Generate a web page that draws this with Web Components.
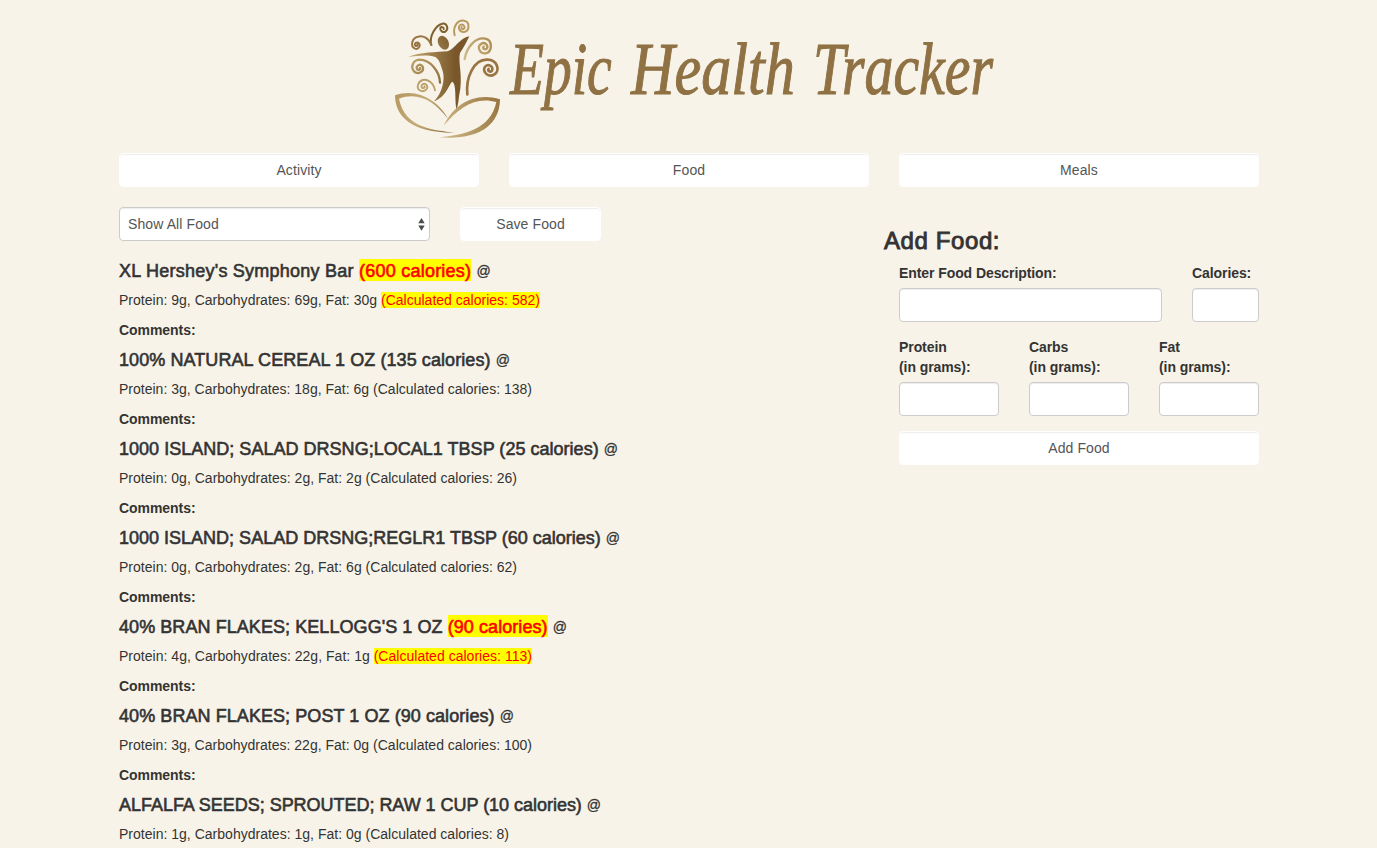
<!DOCTYPE html>
<html lang="en">
<head>
<meta charset="utf-8">
<title>Epic Health Tracker</title>
<style>
html,body{margin:0;height:848px;overflow:hidden;background:#f8f3e8}
body{font:14px/20px "Liberation Sans",Arial,sans-serif;color:#333}
</style>
</head>
<body>
<health-app></health-app>
<script>
const define = (name, html, setup) => {
  const t = document.createElement('template');
  t.innerHTML = html;
  customElements.define(name, class extends HTMLElement {
    constructor() {
      super();
      this.attachShadow({mode: 'open'}).append(t.content.cloneNode(true));
    }
    connectedCallback() { if (setup) setup(this, this.shadowRoot); }
  });
};

define('brand-logo', `
<style>:host{display:block;height:153px;box-sizing:border-box;padding:10px 0 0 385px}svg{display:block;overflow:visible}
text{font-family:"Liberation Serif",serif;font-style:italic;font-size:74px;fill:#8f7143;stroke:#8f7143;stroke-width:1.1}</style>
<svg width="625" height="135" viewBox="0 0 625 135">
<defs>
<linearGradient id="b" gradientUnits="userSpaceOnUse" x1="70" y1="130" x2="245" y2="130"><stop offset="0" stop-color="#c9b27c"/><stop offset=".35" stop-color="#a28450"/><stop offset=".8" stop-color="#79572a"/><stop offset="1" stop-color="#79572a"/></linearGradient>
<linearGradient id="l" gradientUnits="userSpaceOnUse" x1="30" y1="260" x2="205" y2="350"><stop stop-color="#b69861"/><stop offset=".5" stop-color="#c4ac78"/><stop offset="1" stop-color="#886537"/></linearGradient>
<linearGradient id="r" gradientUnits="userSpaceOnUse" x1="175" y1="350" x2="345" y2="290"><stop stop-color="#cbb581"/><stop offset="1" stop-color="#997642"/></linearGradient>
<linearGradient id="s" gradientUnits="userSpaceOnUse" x1="80" y1="140" x2="170" y2="220"><stop stop-color="#bfa26b"/><stop offset="1" stop-color="#8e6d3c"/></linearGradient>
<linearGradient id="q" gradientUnits="userSpaceOnUse" x1="238" y1="140" x2="320" y2="90"><stop stop-color="#cdb989"/><stop offset="1" stop-color="#ac8a50"/></linearGradient>
</defs>
<g transform="scale(.333333)">
<g fill="none" stroke-linecap="round" stroke-width="6">
<path stroke="#80602f" d="M139 105C132 80 151 46 172 41C185 39 192 55 182 64C174 70 164 62 166 54C168 49 177 51 176 57"/>
<path stroke="#997544" d="M139 105C132 84 113 76 99 80C80 84 75 109 90 116C101 120 109 105 100 98C92 95 86 104 92 108C96 109 98 106 97 104"/>
<path stroke="#b99a60" d="M209 76C202 49 218 30 237 32C255 34 255 63 237 66C222 67 216 48 228 44C237 42 243 55 235 57C230 58 228 54 230 51"/>
<path stroke="url(#q)" stroke-width="7" d="M239 147C244 113 271 80 301 86C323 91 323 125 302 130C284 132 275 111 288 102C299 94 312 106 305 116C299 121 291 115 296 110"/>
<path stroke="url(#s)" stroke-width="7" d="M165 218C164 184 136 149 103 149C84 150 76 171 87 184C99 196 119 184 113 170C106 158 91 168 96 177C100 183 108 177 105 174"/>
<path stroke="#997444" stroke-width="8" d="M247 253C242 203 266 148 306 149C336 148 347 181 328 193C312 204 292 188 299 172C307 157 328 170 321 182C315 189 306 181 311 177"/>
<path stroke="#bba06a" stroke-width="5.5" d="M150 241C146 218 127 206 113 210C99 214 93 234 104 241C117 249 132 236 125 225C117 216 105 226 111 233C116 237 122 231 118 229"/>
</g>
<ellipse cx="175" cy="98" rx="15.5" ry="22" fill="url(#b)" transform="rotate(-27 175 98)"/>
<path fill="url(#b)" d="M69 141C105 126 157 127 188 124C210 117 223 85 253 79C247 91 236 114 225 129C218 158 236 200 222 259Q220 283 215 297C208 277 216 224 202 215C191 222 185 260 147 274C171 250 181 209 173 183C166 162 163 148 151 141C126 133 99 137 69 141Z"/>
<path fill="url(#l)" d="M189 327C163 274 97 232 30 256C31 321 80 369 207 368C150 359 60 357 42 266C101 244 149 274 189 327Z"/>
<path fill="url(#r)" d="M176 347C208 282 269 245 345 268C344 349 277 391 164 382C234 375 316 360 334 276C272 258 221 293 176 347Z"/>
</g>
<text transform="translate(125 84) scale(.75 1)">Epic</text>
<text transform="translate(246 84) scale(.813 1)">Health</text>
<text transform="translate(428 84) scale(.782 1)">Tracker</text>
</svg>`);

define('ui-button', `
<style>:host{display:block}button{display:block;box-sizing:border-box;width:100%;height:34px;margin:0;padding:0;border:1px solid #fff;border-radius:4px;background:#fff;box-shadow:inset 0 1px 1px rgba(0,0,0,.075);font:inherit;color:#555;letter-spacing:.1px}</style><button><slot></slot></button>`);

define('ui-select', `
<style>:host{display:flex;box-sizing:border-box;width:311px;height:34px;padding:0 4px 0 8px;border:1px solid #ccc;border-radius:4px;background:#fff;box-shadow:inset 0 1px 1px rgba(0,0,0,.075);align-items:center;justify-content:space-between;color:#555;letter-spacing:.1px}svg{display:block}</style>
<span><slot></slot></span><svg width="7" height="13" viewBox="0 0 7 13" fill="#4b4b4b"><path d="M3.5 0L6.7 5.2H.3ZM3.5 12.8L.3 7.6H6.7Z"/></svg>`);

define('ui-field', `
<style>:host{display:block;font-weight:700}label{display:block;margin-bottom:5px;white-space:pre-line;letter-spacing:-.08px}input{display:block;box-sizing:border-box;width:100%;height:34px;border:1px solid #ccc;border-radius:4px;background:#fff;padding:6px 12px;box-shadow:inset 0 1px 1px rgba(0,0,0,.075)}</style>
<label><slot></slot></label><input aria-label="value">`);

define('food-item', `
<style>:host{display:block;height:89px}
h4{margin:0 0 9px;font-size:18px;line-height:20px;height:20px;font-weight:400;-webkit-text-stroke:.6px currentColor;white-space:nowrap}
p{margin:0 0 10px;white-space:nowrap}
b{display:block;letter-spacing:-.05px}
i{font-style:normal}
.at{font-size:14px;-webkit-text-stroke:.3px currentColor;display:inline-block;line-height:14px;vertical-align:1px}
:host([off]) .k{background:#ff0;color:#f00}:host([off]) h4 .k{padding:2px 0 0}
h4>span,p>span{display:inline-block}</style>
<h4><span><i></i><span class="k"></span> <span class="at">@</span></span></h4><p><span><i></i><span class="k"></span></span></p><b>Comments:</b>`,
(h, r) => {
  const a = n => h.getAttribute(n), i = r.querySelectorAll('i'), k = r.querySelectorAll('.k');
  i[0].textContent = a('name') + ' ';
  k[0].textContent = `(${a('cal')} calories)`;
  i[1].textContent = `Protein: ${a('p')}g, Carbohydrates: ${a('c')}g, Fat: ${a('f')}g `;
  k[1].textContent = `(Calculated calories: ${a('calc')})`;
  if (h.hasAttribute('last')) r.querySelector('b').remove();
  const fit = (el, target) => {
    const n = el.textContent.length;
    el.style.letterSpacing = ((target - el.getBoundingClientRect().width) / n) + 'px';
  };
  fit(r.querySelector('h4>span'), +a('hw'));
  fit(r.querySelector('p>span'), +a('pw'));
});

define('food-form', `
<style>:host{display:block;width:375px;padding-top:20px}
h3{margin:0 0 9px;font-size:24px;line-height:27px;font-weight:400;-webkit-text-stroke:.9px currentColor;letter-spacing:.6px}
.body{padding-left:15px}.row{display:grid;gap:30px;margin-bottom:15px}.one{grid-template-columns:263px 67px}.three{grid-template-columns:repeat(3,100px)}</style>
<h3>Add Food:</h3><div class="body">
<div class="row one"><ui-field>Enter Food Description:</ui-field><ui-field>Calories:</ui-field></div>
<div class="row three"><ui-field>Protein
(in grams):</ui-field><ui-field>Carbs
(in grams):</ui-field><ui-field>Fat
(in grams):</ui-field></div>
<ui-button>Add Food</ui-button></div>`);

define('health-app', `
<style>:host{display:block;height:848px;overflow:hidden}
nav{display:grid;grid-template-columns:repeat(3,360px);gap:30px;padding-left:119px;margin-bottom:20px}
main{display:flex;padding-left:119px}.left{width:765px}.tools{display:flex;gap:30px;margin-bottom:20px}.tools ui-button{width:141px}</style>
<brand-logo></brand-logo>
<nav><ui-button>Activity</ui-button><ui-button>Food</ui-button><ui-button>Meals</ui-button></nav>
<main><section class="left"><div class="tools"><ui-select>Show All Food</ui-select><ui-button>Save Food</ui-button></div>
<food-item off name="XL Hershey's Symphony Bar" cal="600" p="9" c="69" f="30" calc="582" hw="372" pw="421"></food-item>
<food-item name="100% NATURAL CEREAL 1 OZ" cal="135" p="3" c="18" f="6" calc="138" hw="391" pw="413"></food-item>
<food-item name="1000 ISLAND; SALAD DRSNG;LOCAL1 TBSP" cal="25" p="0" c="2" f="2" calc="26" hw="499" pw="398"></food-item>
<food-item name="1000 ISLAND; SALAD DRSNG;REGLR1 TBSP" cal="60" p="0" c="2" f="6" calc="62" hw="501" pw="398"></food-item>
<food-item off name="40% BRAN FLAKES; KELLOGG'S 1 OZ" cal="90" p="4" c="22" f="1" calc="113" hw="448" pw="413"></food-item>
<food-item name="40% BRAN FLAKES; POST 1 OZ" cal="90" p="3" c="22" f="0" calc="100" hw="395" pw="413"></food-item>
<food-item last name="ALFALFA SEEDS; SPROUTED; RAW 1 CUP" cal="10" p="1" c="1" f="0" calc="8" hw="482" pw="390"></food-item>
</section><food-form></food-form></main>`);
</script>
</body>
</html>
